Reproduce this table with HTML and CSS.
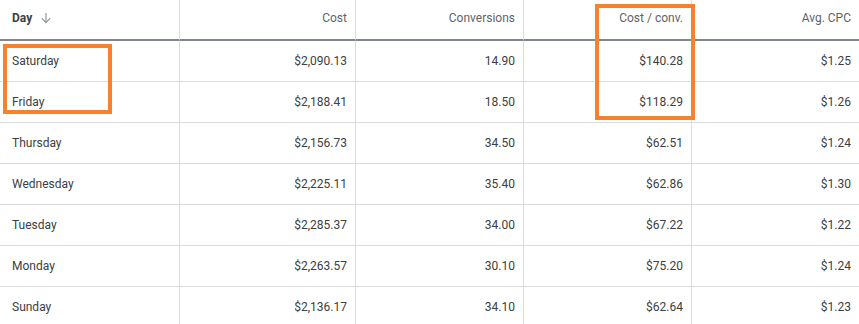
FILE: index.html
```html
<!DOCTYPE html>
<html lang="en">
<head>
  <meta charset="UTF-8" />
  <title>Day of week report</title>
  <link rel="stylesheet" href="styles.css">
</head>
<body>
  <div class="report">
    <table class="stats">
      <colgroup>
        <col class="c-day" />
        <col class="c-cost" />
        <col class="c-conv" />
        <col class="c-cpa" />
        <col class="c-cpc" />
      </colgroup>
      <thead>
        <tr>
          <th class="day-head">Day <svg class="sort" width="12" height="12" viewBox="0 0 12 12"><path d="M6 1v9.5M1.8 6.3L6 10.5l4.2-4.2" fill="none" stroke="#9aa0a6" stroke-width="1.3"/></svg></th>
          <th>Cost</th>
          <th>Conversions</th>
          <th>Cost / conv.</th>
          <th>Avg. CPC</th>
        </tr>
      </thead>
      <tbody>
        <tr><td>Saturday</td><td>$2,090.13</td><td>14.90</td><td>$140.28</td><td>$1.25</td></tr>
        <tr><td>Friday</td><td>$2,188.41</td><td>18.50</td><td>$118.29</td><td>$1.26</td></tr>
        <tr><td>Thursday</td><td>$2,156.73</td><td>34.50</td><td>$62.51</td><td>$1.24</td></tr>
        <tr><td>Wednesday</td><td>$2,225.11</td><td>35.40</td><td>$62.86</td><td>$1.30</td></tr>
        <tr><td>Tuesday</td><td>$2,285.37</td><td>34.00</td><td>$67.22</td><td>$1.22</td></tr>
        <tr><td>Monday</td><td>$2,263.57</td><td>30.10</td><td>$75.20</td><td>$1.24</td></tr>
        <tr><td>Sunday</td><td>$2,136.17</td><td>34.10</td><td>$62.64</td><td>$1.23</td></tr>
      </tbody>
    </table>
    <!-- highlight boxes drawn over the table -->
    <div class="mark mark-days"></div>
    <div class="mark mark-cpa"></div>
  </div>
</body>
</html>
```

FILE: styles.css
```css
body { margin: 0; background: #fff; font-family: Roboto, "Liberation Sans", sans-serif; overflow: hidden; }
.report { position: relative; width: 859px; }
.stats { width: 859px; table-layout: fixed; border-collapse: separate; border-spacing: 0; font-size: 12px; color: #3c4043; }
.c-day { width: 180px; }
.c-cost { width: 176px; }
.c-conv { width: 168px; }
.c-cpa { width: 168px; }
.c-cpc { width: 167px; }
.stats th, .stats td { box-sizing: border-box; text-align: right; padding: 0 8px 0 12px; border-right: 1px solid #dadce0; white-space: nowrap; }
.stats th:last-child, .stats td:last-child { border-right: none; }
.stats th { height: 41px; font-weight: 400; color: #5f6368; border-bottom: 2px solid #80868b; padding-bottom: 3px; }
.stats td { height: 41px; border-bottom: 1px solid #dadce0; }
.stats th.day-head, .stats td:first-child { text-align: left; }
.stats th.day-head { font-weight: 700; color: #3c4043; }
.sort { vertical-align: -2px; margin-left: 5px; }
.mark { position: absolute; border: 4px solid #f8822b; box-sizing: border-box; }
.mark-days { left: 3px; top: 44px; width: 109px; height: 70px; }
.mark-cpa { left: 595px; top: 4px; width: 100px; height: 116px; }
```
